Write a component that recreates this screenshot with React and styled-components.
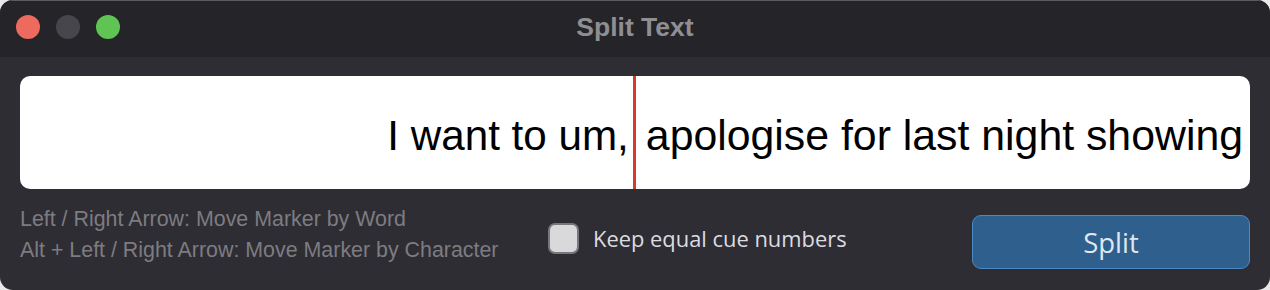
import React from "react";
import styled, { createGlobalStyle } from "styled-components";

const Global = createGlobalStyle`
  html, body { margin: 0; padding: 0; background: #e9e9ea; }
  #root { width: 1270px; height: 290px; }
`;

const Window = styled.div`
  width: 1270px;
  height: 290px;
  box-sizing: border-box;
  border-radius: 13px;
  overflow: hidden;
  background: #2e2d33;
  display: flex;
  flex-direction: column;
`;

const TitleBar = styled.div`
  height: 57px;
  flex: none;
  background: #252429;
  border-top: 1px solid #5c5b60;
  box-sizing: border-box;
  position: relative;
  display: flex;
  align-items: center;
  justify-content: center;
`;

const Lights = styled.div`
  position: absolute;
  left: 16px;
  top: 14px;
  display: flex;
  gap: 16px;
`;

const Light = styled.span`
  width: 24px;
  height: 24px;
  border-radius: 50%;
  background: ${(p) => p.$color};
`;

const Title = styled.div`
  font-family: "Liberation Sans", Arial, sans-serif;
  font-weight: bold;
  font-size: 26.5px;
  color: #8f8e93;
  margin-top: -3px;
`;

const Body = styled.div`
  flex: 1;
  padding: 19px 20px 0 20px;
  display: flex;
  flex-direction: column;
`;

const TextBox = styled.div`
  height: 113px;
  background: #ffffff;
  border-radius: 10px;
  display: flex;
  align-items: stretch;
  justify-content: flex-end;
  padding-right: 7px;
  overflow: hidden;
`;

const Segment = styled.span`
  font-family: "Liberation Sans", Arial, sans-serif;
  font-size: ${(p) => p.$size}px;
  color: #000;
  white-space: pre;
  display: flex;
  align-items: center;
  padding-top: 6px;
`;

const Marker = styled.span`
  width: 3px;
  background: #d93a2f;
  margin: 0 10px 0 4px;
  flex: none;
`;

const Bottom = styled.div`
  display: flex;
  align-items: center;
  margin-top: 24px;
`;

const Hints = styled.div`
  font-family: "Liberation Sans", Arial, sans-serif;
  font-size: 21.4px;
  line-height: 31px;
  color: #7d7c81;
  width: 528px;
  margin-top: -12px;
`;

const CheckLabel = styled.label`
  display: flex;
  align-items: center;
  gap: 14px;
  font-family: "Open Sans", "Noto Sans", sans-serif;
  font-size: 21.9px;
  color: #dcdce0;
  margin-top: -6px;
`;

const Box = styled.span`
  width: 27px;
  height: 27px;
  box-sizing: content-box;
  border: 2px solid #77767b;
  border-radius: 7px;
  background: #d9d9db;
`;

const SplitButton = styled.button`
  margin-left: auto;
  margin-top: 2px;
  width: 278px;
  height: 54px;
  box-sizing: border-box;
  background: #2f5f8c;
  border: 1.5px solid #4d88c4;
  border-radius: 9px;
  color: #dfe7f0;
  font-family: "Open Sans", "Noto Sans", sans-serif;
  font-size: 27.5px;
  padding: 0;
`;

export default function App() {
  return (
    <>
      <Global />
      <Window>
        <TitleBar>
          <Lights>
            <Light $color="#ec6a5e" />
            <Light $color="#47464c" />
            <Light $color="#5fc453" />
          </Lights>
          <Title>Split Text</Title>
        </TitleBar>
        <Body>
          <TextBox>
            <Segment $size={42.2}>I want to um,</Segment>
            <Marker />
            <Segment $size={42.8}>apologise for last night showing</Segment>
          </TextBox>
          <Bottom>
            <Hints>
              Left / Right Arrow: Move Marker by Word
              <br />
              Alt + Left / Right Arrow: Move Marker by Character
            </Hints>
            <CheckLabel>
              <Box />
              Keep equal cue numbers
            </CheckLabel>
            <SplitButton>Split</SplitButton>
          </Bottom>
        </Body>
      </Window>
    </>
  );
}
